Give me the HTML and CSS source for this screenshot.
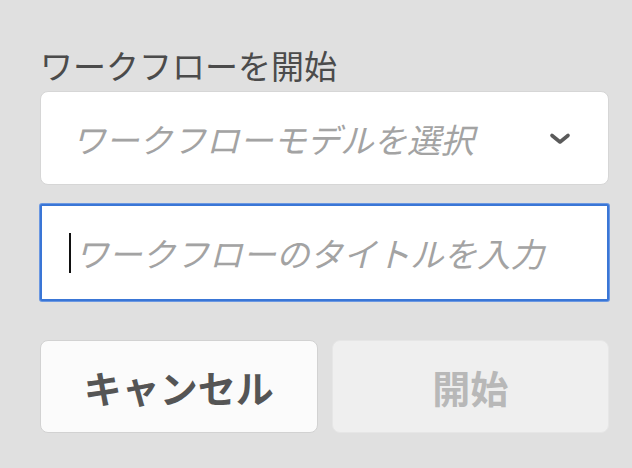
FILE: index.html
```html
<!DOCTYPE html>
<html lang="ja">
<head>
<meta charset="utf-8">
<link rel="stylesheet" href="styles.css">
</head>
<body>
<div class="dialog">
  <div class="label">ワークフローを開始</div>
  <div class="select">
    <span class="placeholder">ワークフローモデルを選択</span>
    <svg class="chev" width="24" height="14" viewBox="0 0 24 14"><path d="M4 3.5 L12 10 L20 3.5" fill="none" stroke="#5a5a5a" stroke-width="3.6" stroke-linecap="round" stroke-linejoin="round"/></svg>
  </div>
  <div class="input">
    <span class="caret"></span><span class="placeholder">ワークフローのタイトルを入力</span>
  </div>
  <div class="buttons">
    <div class="btn cancel">キャンセル</div>
    <div class="btn start">開始</div>
  </div>
</div>
</body>
</html>
```
FILE: styles.css
```css
html, body {
  margin: 0;
  padding: 0;
  background: #e0e0e0;
  font-family: "Noto Sans CJK JP", "Noto Sans", sans-serif;
}
.dialog {
  width: 569px;
  padding: 45px 0 0 40px;
  display: flex;
  flex-direction: column;
}
.label {
  font-size: 33px;
  line-height: 40px;
  color: #4b4b4b;
  margin-bottom: 6px;
}
.select {
  height: 94px;
  box-sizing: border-box;
  background: #fff;
  border-radius: 8px;
  border: 1px solid #d6d6d6;
  display: flex;
  align-items: center;
  justify-content: space-between;
  padding: 0 36px 0 31px;
}
.chev {
  margin-top: 2px;
}
.placeholder {
  font-size: 33.5px;
  font-style: italic;
  color: #a3a3a3;
}
.input {
  margin-top: 19px;
  height: 97px;
  box-sizing: border-box;
  background: #fff;
  border: 2px solid #3a76d6;
  box-shadow: 0 0 0 1px #6b98e2;
  border-radius: 2px;
  display: flex;
  align-items: center;
  padding-left: 27px;
}
.caret {
  width: 2px;
  height: 40px;
  background: #111;
  margin-right: 4px;
}
.buttons {
  margin-top: 39px;
  display: flex;
  gap: 14px;
}
.btn {
  flex: 1;
  height: 93px;
  box-sizing: border-box;
  border-radius: 8px;
  display: flex;
  align-items: center;
  justify-content: center;
  font-size: 38px;
  font-weight: bold;
}
.cancel {
  background: #fbfbfb;
  border: 1px solid #d2d2d2;
  color: #555;
}
.start {
  background: #efefef;
  border: 1px solid #e6e6e6;
  color: #b8b8b8;
}
```
